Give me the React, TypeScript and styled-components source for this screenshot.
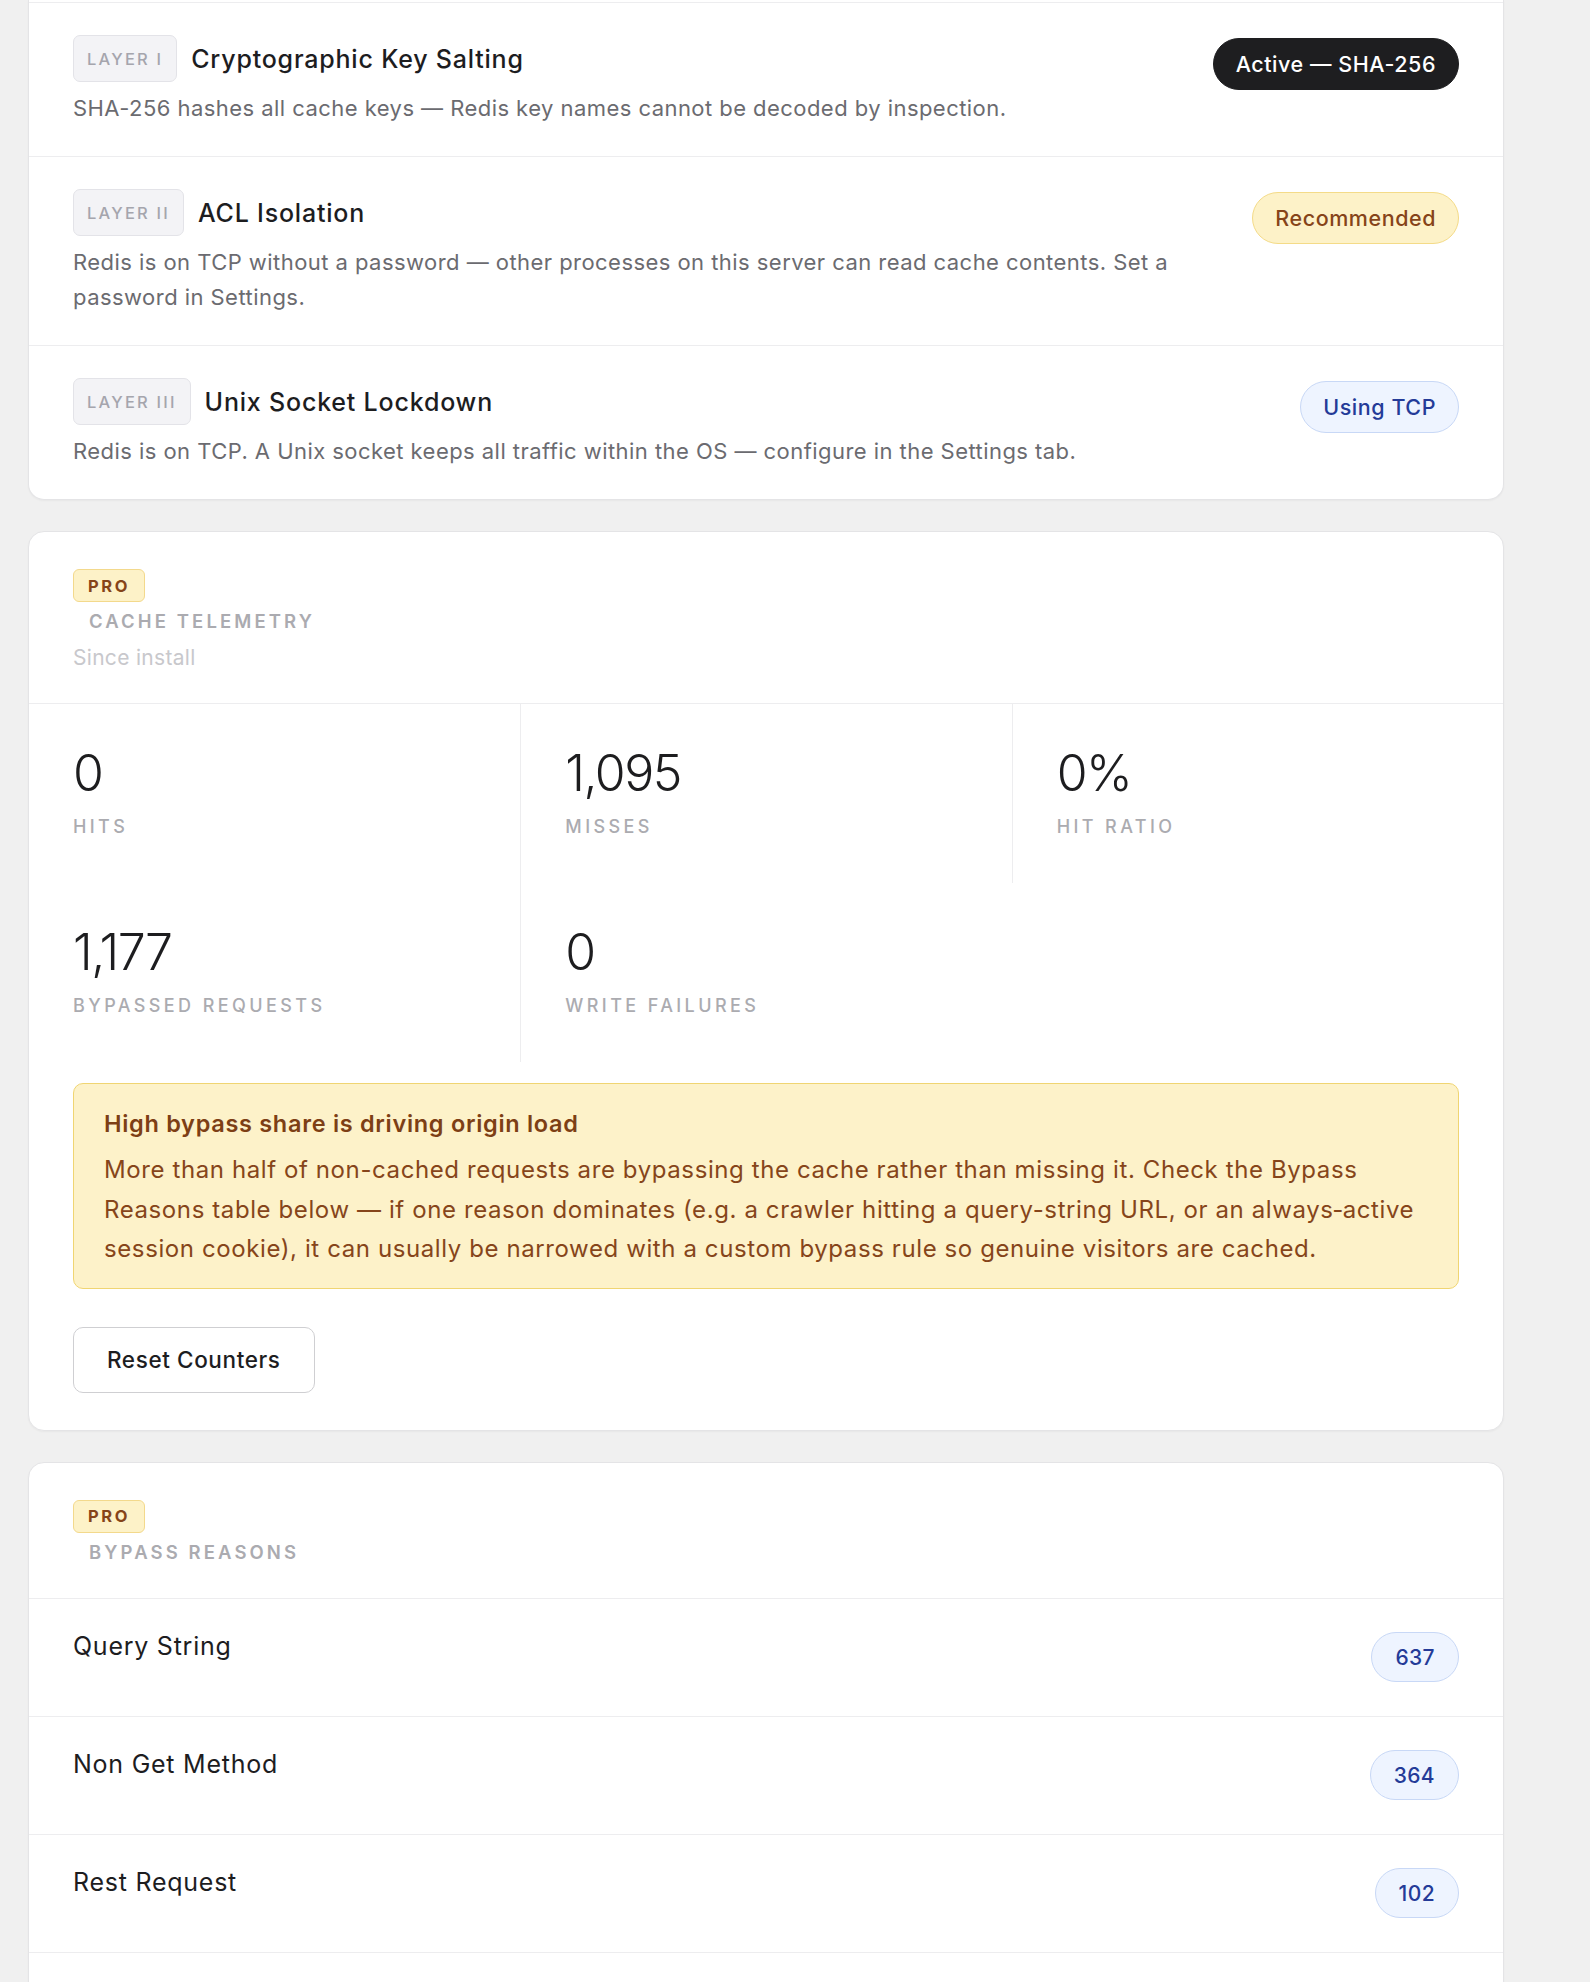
import React from "react";
import styled, { createGlobalStyle } from "styled-components";

const GlobalStyle = createGlobalStyle`
  html, body {
    margin: 0;
    padding: 0;
    background: #f0f0f0;
  }
  body {
    font-family: Inter, "Noto Sans", "Liberation Sans", sans-serif;
    color: #1d1d1f;
    -webkit-font-smoothing: antialiased;
  }
  * { box-sizing: border-box; }
`;

const Page = styled.div`
  display: flex;
  flex-direction: column;
  gap: 31px;
  padding: 0 86px 0 28px;
`;

const Card = styled.section<{ $clippedTop?: boolean; $tail?: number }>`
  background: #ffffff;
  border: 1px solid #e4e4e6;
  border-radius: 16px;
  box-shadow: 0 1px 2px rgba(0, 0, 0, 0.04);
  overflow: hidden;
  padding-bottom: ${(p) => p.$tail ?? 0}px;
  ${(p) =>
    p.$clippedTop &&
    `
    border-top: none;
    border-top-left-radius: 0;
    border-top-right-radius: 0;
    padding-top: 2px;
  `}
`;

/* ---------- security layers ---------- */

const LayerRow = styled.div`
  display: flex;
  align-items: flex-start;
  gap: 40px;
  padding: 32px 44px 30px;
  border-top: 1px solid #ededef;
`;

const LayerBody = styled.div`
  flex: 1;
  min-width: 0;
`;

const LayerHead = styled.div`
  display: flex;
  align-items: center;
  gap: 14px;
`;

const LayerTag = styled.span`
  display: inline-flex;
  align-items: center;
  height: 47px;
  padding: 0 13px;
  border: 1.5px solid #e3e3e8;
  border-radius: 7px;
  background: #f3f3f6;
  color: #a5a5ad;
  font-size: 16.5px;
  font-weight: 500;
  letter-spacing: 2.2px;
  text-transform: uppercase;
`;

const LayerTitle = styled.h3`
  margin: 0;
  font-size: 25px;
  font-weight: 500;
  letter-spacing: 0.8px;
  color: #1d1d1f;
`;

const LayerText = styled.p`
  margin: 9px 0 0;
  font-size: 22px;
  line-height: 35px;
  letter-spacing: 0.45px;
  color: #6b6b70;
`;

type Tone = "dark" | "amber" | "blue";

const tones: Record<Tone, { bg: string; border: string; fg: string }> = {
  dark: { bg: "#1e1e20", border: "#1e1e20", fg: "#ffffff" },
  amber: { bg: "#fdf2c8", border: "#f4db88", fg: "#864419" },
  blue: { bg: "#eef4ff", border: "#c8d8f6", fg: "#243b98" },
};

const StatusPill = styled.span<{ $tone: Tone }>`
  flex-shrink: 0;
  display: inline-flex;
  align-items: center;
  height: 52px;
  margin-top: 3px;
  padding: 0 22px;
  border-radius: 999px;
  border: 1.5px solid ${(p) => tones[p.$tone].border};
  background: ${(p) => tones[p.$tone].bg};
  color: ${(p) => tones[p.$tone].fg};
  font-size: 21.5px;
  font-weight: 500;
  letter-spacing: 0.55px;
  white-space: nowrap;
`;

/* ---------- card headers ---------- */

const CardHeader = styled.header<{ $pb: number }>`
  padding: 37px 44px ${(p) => p.$pb}px;
  border-bottom: 1px solid #ededef;
`;

const ProBadge = styled.span`
  display: inline-flex;
  align-items: center;
  height: 33px;
  padding: 0 14px;
  border: 1.5px solid #f3d98c;
  border-radius: 6px;
  background: #fdf2c8;
  color: #864419;
  font-size: 16.5px;
  font-weight: 700;
  letter-spacing: 2.6px;
`;

const SectionTitle = styled.h2`
  margin: 5px 0 0 16px;
  font-size: 18.5px;
  font-weight: 600;
  letter-spacing: 3.1px;
  line-height: 28px;
  text-transform: uppercase;
  color: #ababb0;
`;

const SectionNote = styled.div`
  margin-top: 9px;
  font-size: 21px;
  line-height: 28px;
  letter-spacing: 0.3px;
  color: #c8c8cc;
`;

/* ---------- telemetry ---------- */

const StatGrid = styled.div`
  display: grid;
  grid-template-columns: repeat(3, 1fr);
`;

const StatCell = styled.div`
  padding: 41px 44px 44px;
  &:not(:nth-child(3n + 1)) {
    border-left: 1.5px solid #ededef;
  }
`;

const StatValue = styled.div`
  font-size: 50px;
  font-weight: 300;
  line-height: 57px;
  letter-spacing: -1.5px;
  color: #1d1d1f;
`;

const StatLabel = styled.div`
  margin-top: 13px;
  font-size: 18px;
  font-weight: 500;
  line-height: 24px;
  letter-spacing: 3.4px;
  text-transform: uppercase;
  color: #ababb0;
`;

const Footer = styled.div`
  display: flex;
  flex-direction: column;
  align-items: flex-start;
  gap: 38px;
  padding: 21px 44px 37px;
`;

const Notice = styled.div`
  align-self: stretch;
  padding: 24px 24px 19px 30px;
  border: 1.5px solid #f0d572;
  border-radius: 10px;
  background: #fdf2c9;
  color: #7d3f15;
`;

const NoticeTitle = styled.div`
  font-size: 23.5px;
  font-weight: 600;
  line-height: 32px;
  letter-spacing: 0.7px;
`;

const NoticeText = styled.p`
  margin: 10px 0 0;
  font-size: 24px;
  line-height: 39.5px;
  letter-spacing: 0.6px;
  color: #86451a;
`;

const GhostButton = styled.button`
  height: 66px;
  padding: 0 33px;
  border: 1.5px solid #cfcfd2;
  border-radius: 10px;
  background: #ffffff;
  color: #1d1d1f;
  font-family: inherit;
  font-size: 22.5px;
  font-weight: 500;
  letter-spacing: 0.6px;
  cursor: pointer;
`;

/* ---------- bypass reasons ---------- */

const ReasonRow = styled.div`
  display: flex;
  align-items: center;
  justify-content: space-between;
  padding: 31.5px 44px;
  border-bottom: 1px solid #ededef;
`;

const ReasonName = styled.span`
  margin-bottom: 22px;
  font-size: 25px;
  line-height: 32px;
  letter-spacing: 0.75px;
  color: #1d1d1f;
`;

const CountPill = styled.span`
  display: inline-flex;
  align-items: center;
  height: 50px;
  padding: 0 23px;
  border: 1.5px solid #c8d8f6;
  border-radius: 999px;
  background: #eef4ff;
  color: #243b98;
  font-size: 21px;
  font-weight: 500;
  letter-spacing: 0.4px;
`;

const layers: { tag: string; title: string; text: string; status: string; tone: Tone }[] = [
  {
    tag: "Layer I",
    title: "Cryptographic Key Salting",
    text: "SHA-256 hashes all cache keys — Redis key names cannot be decoded by inspection.",
    status: "Active — SHA-256",
    tone: "dark",
  },
  {
    tag: "Layer II",
    title: "ACL Isolation",
    text: "Redis is on TCP without a password — other processes on this server can read cache contents. Set a password in Settings.",
    status: "Recommended",
    tone: "amber",
  },
  {
    tag: "Layer III",
    title: "Unix Socket Lockdown",
    text: "Redis is on TCP. A Unix socket keeps all traffic within the OS — configure in the Settings tab.",
    status: "Using TCP",
    tone: "blue",
  },
];

const stats = [
  { value: "0", label: "Hits" },
  { value: "1,095", label: "Misses" },
  { value: "0%", label: "Hit Ratio" },
  { value: "1,177", label: "Bypassed Requests" },
  { value: "0", label: "Write Failures" },
];

const reasons = [
  { name: "Query String", count: 637 },
  { name: "Non Get Method", count: 364 },
  { name: "Rest Request", count: 102 },
];

export default function App() {
  return (
    <>
      <GlobalStyle />
      <Page>
        <Card $clippedTop>
          {layers.map((l) => (
            <LayerRow key={l.tag}>
              <LayerBody>
                <LayerHead>
                  <LayerTag>{l.tag}</LayerTag>
                  <LayerTitle>{l.title}</LayerTitle>
                </LayerHead>
                <LayerText>{l.text}</LayerText>
              </LayerBody>
              <StatusPill $tone={l.tone}>{l.status}</StatusPill>
            </LayerRow>
          ))}
        </Card>

        <Card>
          <CardHeader $pb={31}>
            <ProBadge>PRO</ProBadge>
            <SectionTitle>Cache Telemetry</SectionTitle>
            <SectionNote>Since install</SectionNote>
          </CardHeader>
          <StatGrid>
            {stats.map((s) => (
              <StatCell key={s.label}>
                <StatValue>{s.value}</StatValue>
                <StatLabel>{s.label}</StatLabel>
              </StatCell>
            ))}
          </StatGrid>
          <Footer>
            <Notice>
              <NoticeTitle>High bypass share is driving origin load</NoticeTitle>
              <NoticeText>
                More than half of non-cached requests are bypassing the cache rather than missing it. Check the
                Bypass Reasons table below — if one reason dominates (e.g. a crawler hitting a query-string URL, or
                an always&#8209;active session cookie), it can usually be narrowed with a custom bypass rule so
                genuine visitors are cached.
              </NoticeText>
            </Notice>
            <GhostButton type="button">Reset Counters</GhostButton>
          </Footer>
        </Card>

        <Card $tail={80}>
          <CardHeader $pb={32}>
            <ProBadge>PRO</ProBadge>
            <SectionTitle>Bypass Reasons</SectionTitle>
          </CardHeader>
          {reasons.map((r) => (
            <ReasonRow key={r.name}>
              <ReasonName>{r.name}</ReasonName>
              <CountPill>{r.count}</CountPill>
            </ReasonRow>
          ))}
        </Card>
      </Page>
    </>
  );
}
